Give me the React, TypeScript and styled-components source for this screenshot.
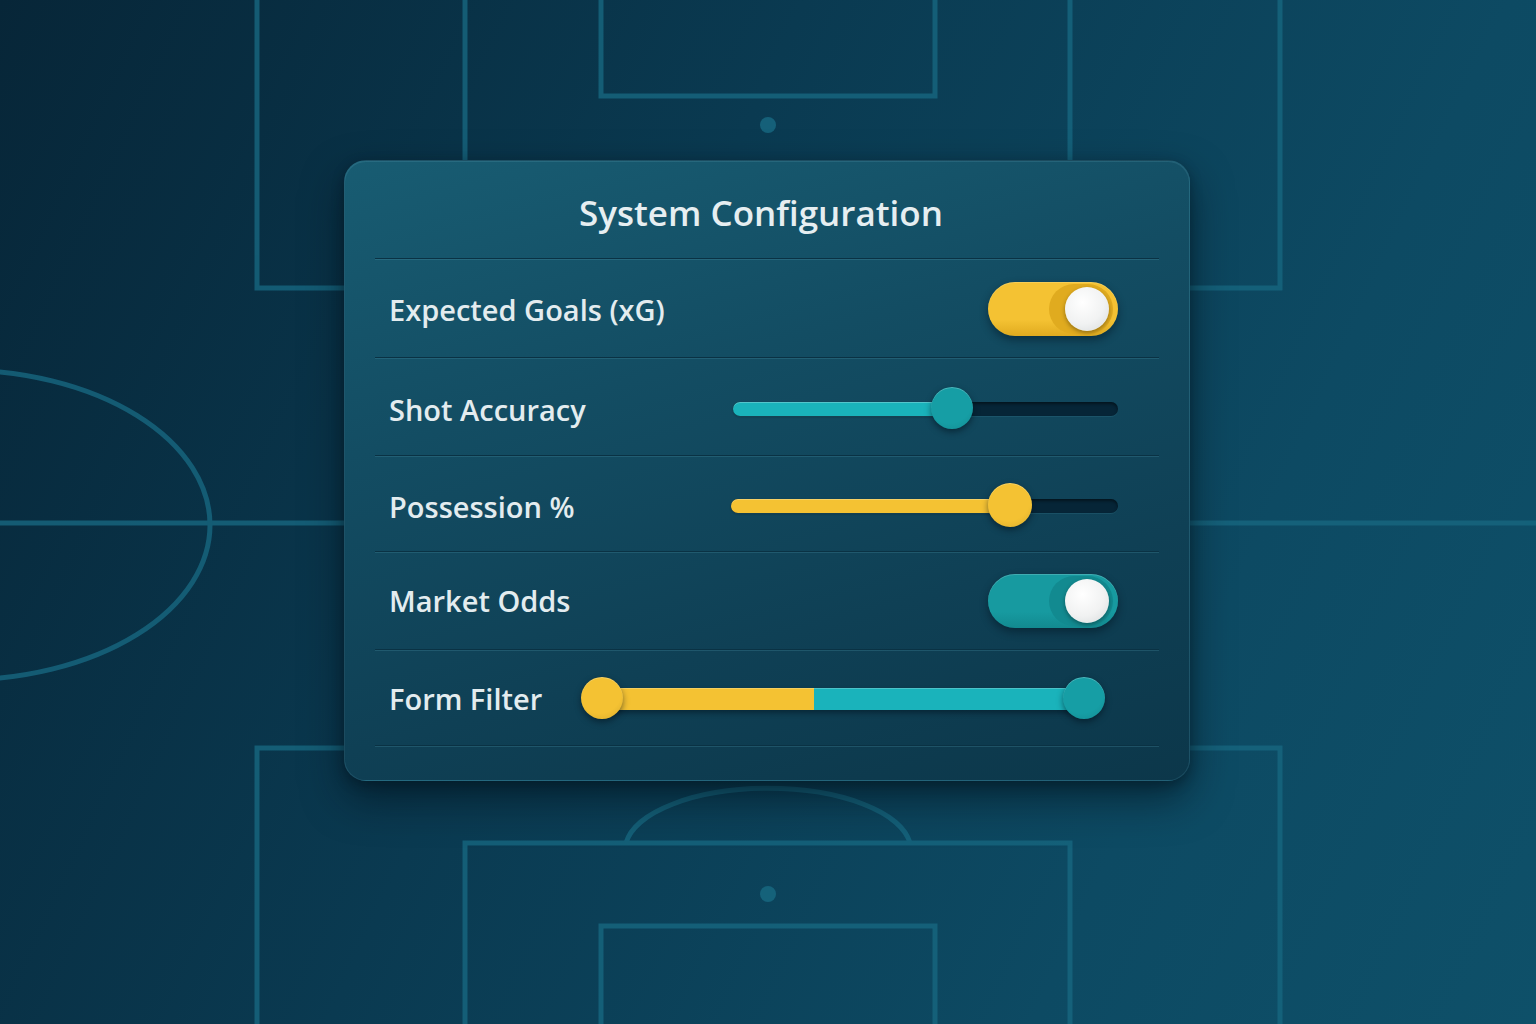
import styled, { createGlobalStyle } from 'styled-components';

const GlobalStyle = createGlobalStyle`
  html, body {
    margin: 0;
    padding: 0;
    background: #0a3347;
  }
  body {
    font-family: "Open Sans", "Noto Sans", "Liberation Sans", sans-serif;
  }
`;

const Stage = styled.div`
  width: 1536px;
  height: 1024px;
  overflow: hidden;
  display: grid;
  background: linear-gradient(115deg, #072638 0%, #0a3a51 40%, #0d4a63 75%, #0e5069 100%);
`;

const Pitch = styled.svg`
  grid-area: 1 / 1;
  width: 1536px;
  height: 1024px;
`;

const Front = styled.div`
  grid-area: 1 / 1;
  display: flex;
  justify-content: center;
  align-items: flex-start;
  padding: 160px 2px 0 0;
`;

const Card = styled.section`
  width: 846px;
  box-sizing: border-box;
  padding: 0 30px 34px;
  border-radius: 22px;
  background: linear-gradient(165deg, #185c72 0%, #134d63 35%, #0f4055 70%, #0c374a 100%);
  border: 1px solid rgba(120, 190, 210, 0.14);
  box-shadow:
    0 18px 40px rgba(2, 14, 24, 0.55),
    0 4px 12px rgba(2, 14, 24, 0.35),
    inset 0 1px 0 rgba(160, 220, 235, 0.12);
`;

const Header = styled.h1`
  margin: 0;
  height: 98px;
  display: flex;
  align-items: center;
  justify-content: center;
  padding: 6px 12px 0 0;
  box-sizing: border-box;
  font-size: 35px;
  font-weight: 600;
  letter-spacing: 0;
  color: #e6eef1;
  border-bottom: 1px solid #0a3244;
  box-shadow: 0 1px 0 rgba(70, 140, 160, 0.35);
`;

interface RowProps {
  $height?: number;
  $right?: number;
  $shift?: number;
}

const Row = styled.div<RowProps>`
  height: ${(p) => p.$height || 97}px;
  box-sizing: border-box;
  display: flex;
  align-items: center;
  justify-content: space-between;
  padding: ${(p) => p.$shift || 0}px ${(p) => p.$right ?? 41}px 0 14px;
  border-bottom: 1px solid #0a3244;
  box-shadow: 0 1px 0 rgba(70, 140, 160, 0.3);
`;

const Label = styled.span`
  font-size: 29px;
  font-weight: 600;
  color: #e3ecef;
  white-space: nowrap;
`;

interface ToggleProps {
  $color: string;
  $dark: string;
}

const ToggleTrack = styled.div<ToggleProps>`
  position: relative;
  width: 130px;
  height: 54px;
  border-radius: 27px;
  background: linear-gradient(180deg, ${(p) => p.$color} 0%, ${(p) => p.$color} 70%, ${(p) => p.$dark} 100%);
  box-shadow: 0 4px 8px rgba(2, 16, 26, 0.45), inset 0 1px 0 rgba(255, 255, 255, 0.18);
  display: flex;
  align-items: center;
  justify-content: flex-end;
  padding-right: 5px;
  box-sizing: border-box;
`;

const KnobWell = styled.div<{ $dark: string }>`
  width: 64px;
  height: 50px;
  border-radius: 25px;
  background: ${(p) => p.$dark};
  display: flex;
  align-items: center;
  justify-content: flex-end;
  padding-right: 4px;
  box-sizing: border-box;
`;

const ToggleKnob = styled.div`
  width: 44px;
  height: 44px;
  border-radius: 50%;
  background: radial-gradient(circle at 40% 35%, #ffffff 0%, #f1f2f2 55%, #d6dadb 100%);
  box-shadow: 0 2px 4px rgba(0, 0, 0, 0.35);
`;

interface SliderBoxProps {
  $width: number;
}

const SliderBox = styled.div<SliderBoxProps>`
  position: relative;
  width: ${(p) => p.$width}px;
  height: 44px;
  display: flex;
  align-items: center;
`;

const Track = styled.div`
  position: relative;
  width: 100%;
  height: 14px;
  border-radius: 7px;
  background: #062537;
  box-shadow: inset 0 2px 3px rgba(0, 0, 0, 0.45), 0 1px 0 rgba(90, 160, 180, 0.15);
`;

const Fill = styled.div<{ $color: string }>`
  height: 100%;
  border-radius: 7px;
  background: ${(p) => p.$color};
  box-shadow: inset 0 1px 0 rgba(255, 255, 255, 0.25), 0 1px 2px rgba(0, 0, 0, 0.3);
`;

interface ThumbProps {
  $color: string;
  $size: number;
}

const Thumb = styled.div<ThumbProps>`
  position: absolute;
  top: 50%;
  width: ${(p) => p.$size}px;
  height: ${(p) => p.$size}px;
  margin-left: -${(p) => p.$size / 2}px;
  margin-top: -${(p) => p.$size / 2 + 1}px;
  border-radius: 50%;
  background: radial-gradient(circle at 45% 35%, ${(p) => p.$color} 0%, ${(p) => p.$color} 60%, rgba(0, 0, 0, 0.12) 100%), ${(p) => p.$color};
  box-shadow: 0 3px 6px rgba(2, 14, 24, 0.5), inset 0 1px 0 rgba(255, 255, 255, 0.25);
`;

const RangeBox = styled.div`
  position: relative;
  width: 524px;
  height: 44px;
  display: flex;
  align-items: center;
  padding: 0 21px;
  box-sizing: border-box;
`;

const RangeTrack = styled.div`
  flex: 1;
  height: 22px;
  display: flex;
  box-shadow: 0 3px 5px rgba(2, 14, 24, 0.45);
`;

const RangePart = styled.div<{ $color: string }>`
  height: 100%;
  background: ${(p) => p.$color};
  box-shadow: inset 0 1px 0 rgba(255, 255, 255, 0.22);
`;

const YELLOW = '#f4c233';
const YELLOW_DARK = '#e0ab1f';
const TEAL = '#1ab3bb';
const TEAL_KNOB = '#169ea5';

function Toggle({ color, dark }: { color: string; dark: string }) {
  return (
    <ToggleTrack $color={color} $dark={dark}>
      <KnobWell $dark={dark}>
        <ToggleKnob />
      </KnobWell>
    </ToggleTrack>
  );
}

function Slider({ width, value, color, knob, size }: { width: number; value: number; color: string; knob: string; size: number }) {
  return (
    <SliderBox $width={width}>
      <Track>
        <Fill $color={color} style={{ width: `${value}%` }} />
      </Track>
      <Thumb $color={knob} $size={size} style={{ left: `${value}%` }} />
    </SliderBox>
  );
}

function RangeSlider({ split }: { split: number }) {
  return (
    <RangeBox>
      <RangeTrack>
        <RangePart $color={YELLOW} style={{ width: `${split}%` }} />
        <RangePart $color={TEAL} style={{ width: `${100 - split}%` }} />
      </RangeTrack>
      <Thumb $color={YELLOW} $size={42} style={{ left: '21px' }} />
      <Thumb $color={TEAL_KNOB} $size={42} style={{ left: 'calc(100% - 21px)' }} />
    </RangeBox>
  );
}

function PitchLines() {
  const s = '#176780';
  return (
    <Pitch viewBox="0 0 1536 1024">
      <g fill="none" stroke={s} strokeWidth={5} opacity={0.8}>
        <rect x={257} y={-20} width={1023} height={308} />
        <rect x={465} y={-20} width={605} height={260} />
        <rect x={601} y={-20} width={334} height={116} />
        <line x1={0} y1={523} x2={1536} y2={523} />
        <ellipse cx={-40} cy={525} rx={250} ry={155} />
        <rect x={257} y={748} width={1023} height={320} />
        <path d="M 626 843 A 143 62 0 0 1 910 843" />
        <rect x={465} y={843} width={605} height={220} />
        <rect x={601} y={926} width={334} height={140} />
      </g>
      <g fill={s} opacity={0.85}>
        <circle cx={768} cy={125} r={8} />
        <circle cx={768} cy={894} r={8} />
      </g>
    </Pitch>
  );
}

export default function App() {
  return (
    <>
      <GlobalStyle />
      <Stage>
        <PitchLines />
        <Front>
          <Card>
            <Header>System Configuration</Header>
            <Row $height={99} $shift={2}>
              <Label>Expected Goals (xG)</Label>
              <Toggle color={YELLOW} dark={YELLOW_DARK} />
            </Row>
            <Row $height={98} $shift={5}>
              <Label>Shot Accuracy</Label>
              <Slider width={385} value={57} color={TEAL} knob={TEAL_KNOB} size={42} />
            </Row>
            <Row $height={96} $shift={5}>
              <Label>Possession %</Label>
              <Slider width={387} value={72} color={YELLOW} knob={YELLOW} size={44} />
            </Row>
            <Row $height={98}>
              <Label>Market Odds</Label>
              <Toggle color="#179aa0" dark="#128a90" />
            </Row>
            <Row $height={96} $right={54} $shift={2}>
              <Label>Form Filter</Label>
              <RangeSlider split={44} />
            </Row>
          </Card>
        </Front>
      </Stage>
    </>
  );
}
